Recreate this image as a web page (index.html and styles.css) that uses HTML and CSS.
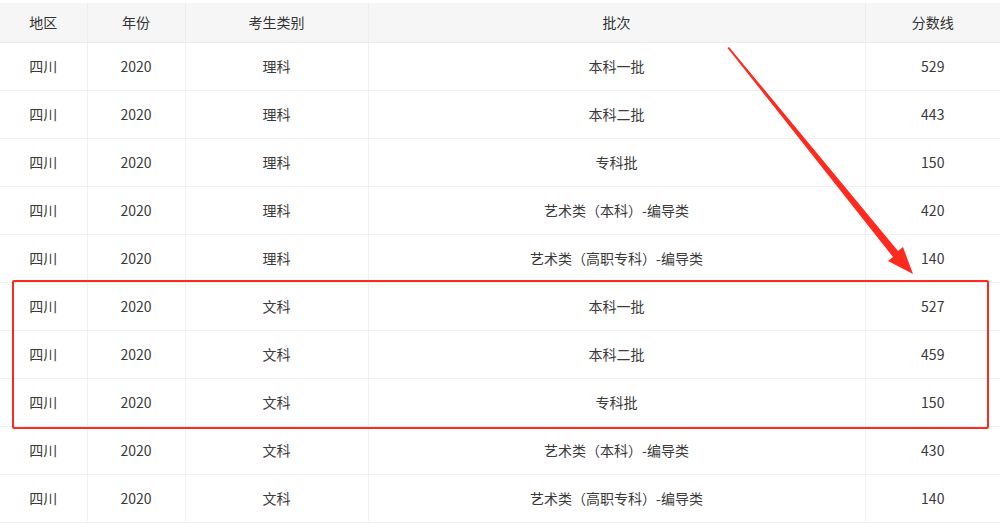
FILE: index.html
```html
<!DOCTYPE html>
<html lang="zh">
<head>
<meta charset="utf-8">
<link rel="stylesheet" href="styles.css">
</head>
<body>
<div class="wrap">
<table class="score">
<colgroup><col class="c1"><col class="c2"><col class="c3"><col class="c4"><col class="c5"></colgroup>
<thead>
<tr><th>地区</th><th>年份</th><th>考生类别</th><th>批次</th><th>分数线</th></tr>
</thead>
<tbody>
<tr><td>四川</td><td>2020</td><td>理科</td><td>本科一批</td><td>529</td></tr>
<tr><td>四川</td><td>2020</td><td>理科</td><td>本科二批</td><td>443</td></tr>
<tr><td>四川</td><td>2020</td><td>理科</td><td>专科批</td><td>150</td></tr>
<tr><td>四川</td><td>2020</td><td>理科</td><td>艺术类（本科）-编导类</td><td>420</td></tr>
<tr><td>四川</td><td>2020</td><td>理科</td><td>艺术类（高职专科）-编导类</td><td>140</td></tr>
<tr><td>四川</td><td>2020</td><td>文科</td><td>本科一批</td><td>527</td></tr>
<tr><td>四川</td><td>2020</td><td>文科</td><td>本科二批</td><td>459</td></tr>
<tr><td>四川</td><td>2020</td><td>文科</td><td>专科批</td><td>150</td></tr>
<tr><td>四川</td><td>2020</td><td>文科</td><td>艺术类（本科）-编导类</td><td>430</td></tr>
<tr><td>四川</td><td>2020</td><td>文科</td><td>艺术类（高职专科）-编导类</td><td>140</td></tr>
</tbody>
</table>
<div class="highlight"></div>
<svg class="arrow" width="1000" height="524" viewBox="0 0 1000 524">
<polygon points="727.5,48 729,47 898,251 903,247 913,274 888,261 893,257" fill="#ff2a1f"/>
</svg>
</div>
</body>
</html>
```
FILE: styles.css
```css
html, body {
  margin: 0;
  padding: 0;
  background: #fff;
}
.wrap {
  position: relative;
  width: 1000px;
  height: 524px;
  overflow: hidden;
  padding-top: 3px;
  box-sizing: border-box;
}
.score {
  width: 1000px;
  border-collapse: collapse;
  table-layout: fixed;
  font-family: "Noto Sans CJK SC", "Microsoft YaHei", sans-serif;
  font-size: 14px;
  color: #3a3a3a;
}
.c1 { width: 87px; }
.c2 { width: 98px; }
.c3 { width: 183px; }
.c4 { width: 497px; }
.c5 { width: 135px; }
.score th {
  height: 37px;
  padding: 0 0 2px;
  background: #f6f6f6;
  font-weight: normal;
  color: #333;
  border-left: 1px solid #ececec;
  border-bottom: 1px solid #ececec;
  text-align: center;
}
.score td {
  height: 45px;
  padding: 0 0 2px;
  text-align: center;
  border-left: 1px solid #f0f0f0;
  border-bottom: 1px solid #f0f0f0;
}
.score th:first-child, .score td:first-child { border-left: none; }
.highlight {
  position: absolute;
  left: 12px;
  top: 280px;
  width: 977px;
  height: 149px;
  box-sizing: border-box;
  border: 2.5px solid #ff2a1f;
  border-radius: 2px;
}
.arrow {
  position: absolute;
  left: 0;
  top: 0;
}
```
